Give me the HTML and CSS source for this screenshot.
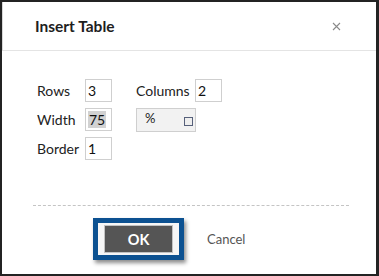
FILE: index.html
```html
<!DOCTYPE html>
<html>
<head>
<meta charset="utf-8">
<link rel="stylesheet" href="styles.css">
</head>
<body>
<div class="dialog">
  <div class="header">
    <h1 class="title">Insert Table</h1>
    <svg class="close" width="9" height="9" viewBox="0 0 9 9"><path d="M1 1 L8 8 M8 1 L1 8" stroke="#8a8a8a" stroke-width="1.1" fill="none"/></svg>
  </div>
  <div class="content">
    <div class="grid">
      <span class="label">Rows</span>
      <span class="field">3</span>
      <span class="spacer"></span>
      <span class="label">Columns</span>
      <span class="field">2</span>

      <span class="label">Width</span>
      <span class="field"><span class="sel">75</span></span>
      <span class="spacer"></span>
      <span class="unit"><span class="pct">%</span><span class="check"></span></span>

      <span class="label">Border</span>
      <span class="field">1</span>
    </div>
  </div>
  <div class="footer">
    <div class="focus"><span class="ok">OK</span></div>
    <span class="cancel">Cancel</span>
  </div>
</div>
</body>
</html>
```
FILE: styles.css
```css
html, body {
  margin: 0;
  padding: 0;
  background: #ffffff;
}
.dialog {
  box-sizing: border-box;
  width: 379px;
  height: 276px;
  border-style: solid;
  border-color: #232323;
  border-width: 2px 3px 2px 2px;
  background: #ffffff;
  font-family: Lato, "Open Sans", sans-serif;
  color: #222;
  display: flex;
  flex-direction: column;
}
.header {
  height: 48px;
  display: flex;
  align-items: center;
  justify-content: space-between;
  padding: 0 35px 0 32px;
  border-bottom: 1px solid #e4e4e4;
  border-left: 1px solid #d8d8d8;
}
.title {
  margin: 0;
  font-size: 15.5px;
  font-weight: 700;
  color: #1e1e1e;
}
.close {
  display: block;
}
.content {
  padding: 28px 0 0 35px;
}
.grid {
  display: grid;
  grid-template-columns: 48px 27px 24px 59px 27px;
  grid-auto-rows: 23px;
  row-gap: 6px;
  align-items: center;
}
.label {
  font-size: 14px;
  color: #222;
}
.field {
  box-sizing: border-box;
  height: 23px;
  border: 1px solid #cfcfcf;
  font-size: 14px;
  line-height: 21px;
  padding-left: 2px;
  color: #111;
}
.sel {
  background: #d2d2d2;
  padding: 0 1px;
}
.unit {
  grid-column: 4 / span 2;
  box-sizing: border-box;
  width: 60px;
  height: 24px;
  align-self: start;
  background: #f2f2f2;
  border: 1px solid #cfcfcf;
  display: flex;
  align-items: center;
  justify-content: space-between;
  padding: 0 2px 2px 8px;
  font-size: 13px;
}
.pct {
  margin-top: -3px;
}
.check {
  box-sizing: border-box;
  width: 9px;
  height: 9px;
  border: 1.5px solid #56607a;
  background: #eeeeee;
  margin-top: 4px;
}
.footer {
  margin: 45px 27px 0 31px;
  border-top: 1px dashed #c4c4c4;
  padding: 12px 0 0 60px;
  display: flex;
  align-items: center;
}
.focus {
  border: 5px solid #0c5191;
  padding: 2px 6px;
  background: #f6f6f6;
  box-shadow: 2px 3px 4px rgba(0, 0, 0, 0.45);
}
.ok {
  box-sizing: border-box;
  display: flex;
  align-items: center;
  justify-content: center;
  width: 69px;
  height: 28px;
  background: #555555;
  border: 1px solid #c3c3c3;
  color: #ffffff;
  font-weight: 700;
  font-size: 14.5px;
}
.cancel {
  margin-left: 23px;
  font-size: 13px;
  color: #555;
}
```
